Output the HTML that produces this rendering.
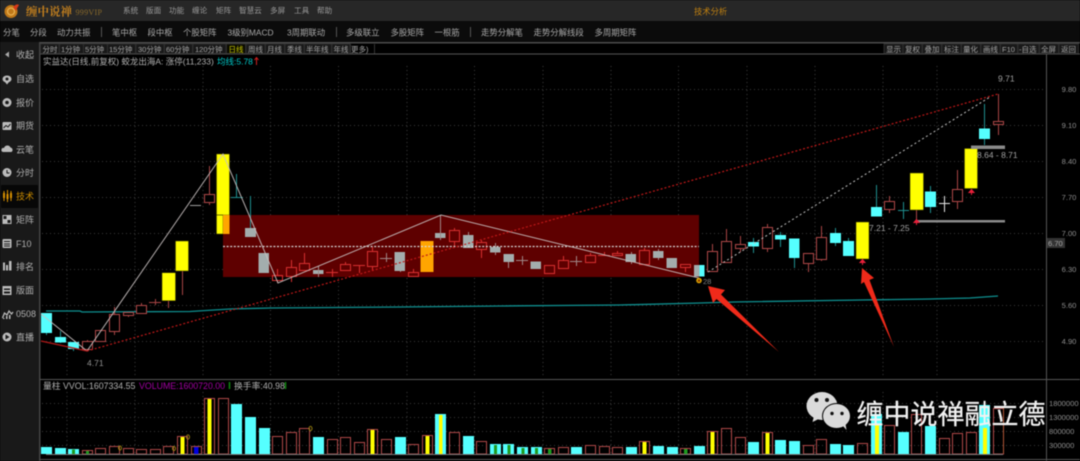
<!DOCTYPE html>
<html><head><meta charset="utf-8"><style>
html,body{margin:0;padding:0;background:#000;width:1080px;height:461px;overflow:hidden}
svg{display:block;position:absolute;left:0;top:0;filter:blur(.4px)}
text{font-family:"Liberation Sans","Noto Sans CJK SC",sans-serif;fill:#a0a0a0}
.m text{font-size:7.6px;fill:#9a9a9a}
.t text{font-size:8.4px;fill:#a8a8a8}
.p text{font-size:7.5px;fill:#a4a4a4}
.s text{font-size:9px;fill:#b0b0b0}
.a text{font-size:7.6px;fill:#8c8c8c}
</style></head><body>
<svg width="1080" height="461" viewBox="0 0 1080 461" xmlns="http://www.w3.org/2000/svg">
<rect width="1080" height="461" fill="#000"/>
<!-- title bar -->
<rect width="1080" height="21" fill="#272727"/>
<rect y="21" width="1080" height="21" fill="#0b0b0b"/>
<circle cx="11" cy="11.500" r="6.500" fill="#c07818"/><circle cx="11" cy="11.500" r="3.500" fill="none" stroke="#e8b050" stroke-width="1.300"/>
<path d="M13 7 Q17 3 19 5 Q17 8 16 11 Z" fill="#d83a18"/>
<text x="26" y="15.500" style="font-family:'Liberation Serif','Noto Serif CJK SC',serif;font-size:11.500px;font-weight:700;fill:#c4801e">缠中说禅</text>
<text x="75.500" y="15" style="font-family:'Liberation Serif',serif;font-size:8px;fill:#8a6a2a;letter-spacing:.3px">999VIP</text>
<g class="m"><text x="123" y="13">系统</text><text x="146" y="13">版面</text><text x="169" y="13">功能</text><text x="192" y="13">缠论</text><text x="216" y="13">矩阵</text><text x="239" y="13">智慧云</text><text x="270" y="13">多屏</text><text x="294" y="13">工具</text><text x="317" y="13">帮助</text></g>
<text x="694" y="14.500" style="font-size:8.300px;fill:#c08010">技术分析</text>
<g class="t"><text x="3" y="35.500">分笔</text><text x="30" y="35.500">分段</text><text x="57" y="35.500">动力共振</text><text x="112" y="35.500">笔中枢</text><text x="147.500" y="35.500">段中枢</text><text x="183" y="35.500">个股矩阵</text><text x="227.500" y="35.500">3级别MACD</text><text x="287" y="35.500">3周期联动</text><text x="346" y="35.500">多级联立</text><text x="390.500" y="35.500">多股矩阵</text><text x="434.500" y="35.500">一根筋</text><text x="481" y="35.500">走势分解笔</text><text x="533.500" y="35.500">走势分解线段</text><text x="594.500" y="35.500">多周期矩阵</text></g>
<path d="M101.500 27v10M336.500 27v10M470.500 27v10" stroke="#555"/>
<!-- sidebar -->
<rect y="42" width="39" height="419" fill="#191919"/>
<rect x="39" y="42" width="1.500" height="419" fill="#444"/>
<rect x="1" y="185" width="37" height="23" fill="#070707"/>
<!-- tab rows -->
<rect x="40" y="42" width="1040" height="1.500" fill="#4c4c4c"/>
<rect x="40" y="53.500" width="1040" height="1" fill="#555"/>
<g fill="#181818" stroke="#333" stroke-width=".8">
<rect x="40.500" y="44" width="18.500" height="9.500"/><rect x="59.500" y="44" width="24" height="9.500"/><rect x="83.500" y="44" width="24" height="9.500"/><rect x="107.500" y="44" width="28" height="9.500"/><rect x="136" y="44" width="28" height="9.500"/><rect x="164.500" y="44" width="28" height="9.500"/><rect x="193" y="44" width="33" height="9.500"/><rect x="226.500" y="44" width="19" height="9.500" fill="#0a0a00"/><rect x="246" y="44" width="19" height="9.500"/><rect x="265.500" y="44" width="19" height="9.500"/><rect x="285" y="44" width="19" height="9.500"/><rect x="304.500" y="44" width="27" height="9.500"/><rect x="332" y="44" width="18" height="9.500"/>
<rect x="884" y="44" width="19" height="9.500"/><rect x="903" y="44" width="19" height="9.500"/><rect x="922.500" y="44" width="19" height="9.500"/><rect x="942" y="44" width="19" height="9.500"/><rect x="961.500" y="44" width="19" height="9.500"/><rect x="981" y="44" width="19" height="9.500"/><rect x="1000.500" y="44" width="17" height="9.500"/><rect x="1018" y="44" width="21" height="9.500"/><rect x="1039.500" y="44" width="19" height="9.500"/><rect x="1059" y="44" width="19.500" height="9.500"/>
</g>
<path d="M350.500 44v9.500M374.500 44v9.500" stroke="#333"/>
<g class="p"><text x="42.500" y="52">分时</text><text x="61" y="52">1分钟</text><text x="85" y="52">5分钟</text><text x="109" y="52">15分钟</text><text x="138" y="52">30分钟</text><text x="166" y="52">60分钟</text><text x="195" y="52">120分钟</text><text x="228.500" y="52" style="fill:#c8c800">日线</text><text x="248" y="52">周线</text><text x="267" y="52">月线</text><text x="287" y="52">季线</text><text x="306" y="52">半年线</text><text x="333.500" y="52">年线</text><text x="351" y="52">更多)</text>
<text x="886" y="52">显示</text><text x="905" y="52">复权</text><text x="924.500" y="52">叠加</text><text x="944" y="52">标注</text><text x="963" y="52">量化</text><text x="983" y="52">画线</text><text x="1002" y="52">F10</text><text x="1019" y="52">-自选</text><text x="1041" y="52">全屏</text><text x="1061" y="52">返回</text></g>
<!-- info -->
<text x="43" y="64.500" style="font-size:8.500px;fill:#b0b0b0">实益达(日线,前复权) 蛟龙出海A: 涨停(11,233)</text>
<text x="217" y="64.500" style="font-size:8.500px;fill:#00c8c8">均线:5.78</text>
<path d="M256.500 65v-7M254.500 60l2-2.500 2 2.500" stroke="#d02020" fill="none"/>
<!-- grid -->
<g stroke="#3a3a3a" stroke-dasharray="1 3" fill="none">
<path d="M42 89.500H1046M42 125.500H1046M42 161.500H1046M42 197.500H1046M42 233.500H1046M42 269.500H1046M42 305.500H1046M42 341.500H1046"/>
<path d="M67 66V375M135 66V375M203 66V375M270.500 66V375M338.500 66V375M407 66V375M474.500 66V375M543 66V375M611 66V375M678.500 66V375M747 66V375M815 66V375M883 66V375M937 66V375"/>
<path d="M67 392V455M135 392V455M203 392V455M270.500 392V455M338.500 392V455M407 392V455M474.500 392V455M543 392V455M611 392V455M678.500 392V455M747 392V455M815 392V455M883 392V455M937 392V455"/>
<path d="M42 403.500H1046M42 417.500H1046M42 431.500H1046M42 445.500H1046"/>
</g>
<!-- axis & pane lines -->
<rect x="1046" y="54" width="1" height="407" fill="#555"/>
<rect x="40" y="379" width="1040" height="1" fill="#555"/>
<rect x="40" y="459" width="1040" height="1" fill="#555"/>
<!-- box -->
<rect x="223" y="215" width="476" height="62" fill="#5e0000"/>
<!-- MA line -->
<polyline points="46,311 80,311 82,312 190,311.500 230,309 270,308 400,307 500,306 620,305 700,303 733,302 860,300 930,299 970,298 998,296" fill="none" stroke="#0e8f8f" stroke-width="1.300"/>
<!-- wicks outside box red -->
<path d="M87.500 340V341M87.500 349V351M114.500 307V315M114.500 331V335M128.500 315V317M141.500 303V305M141.500 313V314M155.500 299V305M149 302.500H161M168.500 300V308M182.500 270V295M209.500 166V194M209.500 202V205M712.500 244V252M726.500 229V242M726.500 262V263M740.500 236V244M740.500 248V252M767.500 224V228M767.500 248V252M808.500 263V272M821.500 226V237M821.500 259V261M889.500 196V201M889.500 209V213M916.500 210V225M957.500 170V189M957.500 201V209M998.500 94V121M998.500 124V135" stroke="#a84444" fill="none"/>
<!-- hollow outside box -->
<path d="M82.500 341.500H92.500V349.500H82.500ZM95.500 330.500H105.500V341.500H95.500ZM109.500 314.500H119.500V331.500H109.500ZM123.500 312.500H133.500V315.500H123.500ZM136.500 305.500H146.500V313.500H136.500ZM204.500 194.500H214.500V202.500H204.500ZM707.500 251.500H717.500V271.500H707.500ZM721.500 241.500H731.500V262.500H721.500ZM735.500 244.500H745.500V248.500H735.500ZM762.500 227.500H772.500V248.500H762.500ZM803.500 253.500H813.500V263.500H803.500ZM816.500 237.500H826.500V259.500H816.500ZM884.500 201.500H894.500V209.500H884.500ZM952.500 189.500H962.500V201.500H952.500ZM993.500 121.500H1003.500V124.500H993.500Z" stroke="#b04848" fill="#000"/>
<!-- wicks cyan -->
<path d="M46.500 333V335M60.500 331V343M73.500 349V351M236.500 174V197M231 197.500H243M250.500 196V228M753.500 238V253M780.500 232V247M794.500 258V268M835.500 228V246M848.500 238V241M876.500 185V216M903.500 202V219M898 210.500H909M930.500 186V213M984.500 104V145" stroke="#1f8f8f" fill="none"/>
<!-- cyan bodies -->
<path d="M41 313h11v20h-11zM55 337h11v5.500h-11zM68 342h11v7h-11zM699.500 265h5v11.500h-5zM748 242h11v4.500h-11zM775 235h11v4.500h-11zM789 238.500h10.500v19.500h-10.500zM830 233h11v10h-11zM843 241h11v15h-11zM871 207h11v9.500h-11zM925 191.500h11v15.500h-11zM979 128.500h11v10.500h-11z" fill="#55ffff"/>
<!-- yellow bodies -->
<path d="M162 272.700h13.500v28h-13.500zM175.500 241h13v30h-13zM216.500 154h13v61h-13zM216.500 215h6.500v19h-6.500zM856 222h13v37h-13zM910 173h13.500v37h-13.500zM964.500 148.500h13v40h-13z" fill="#ffff00" stroke="#3a3a00" stroke-width=".5"/>
<path d="M223 215h6.500v19h-6.500zM420.500 241h13v31h-13z" fill="#ffa500"/>
<!-- box wicks -->
<path d="M277.500 269V275M277.500 280V283M291.500 260V267M291.500 276V282M304.500 253V263M304.500 270V271M332.500 269V277M326 272.500H338M345.500 262V264M345.500 270V271M359.500 265V273M353 265.500H365M372.500 247V251M372.500 266V271M413.500 269V272M413.500 276V277M481.500 240V242M481.500 249V258M454.500 228V230M454.500 241V246M549.500 273V274M563.500 256V260M590.500 253V256M590.500 262V263M604.500 252V256M598 255.500H610M617.500 251V253M644.500 248V250M644.500 264V265M685.500 267V272" stroke="#d83030" fill="none"/>
<path d="M272.500 275.500H282.500V280.500H272.500ZM286.500 267.500H296.500V276.500H286.500ZM299.500 263.500H309.500V270.500H299.500ZM340.500 264.500H350.500V270.500H340.500ZM367.500 251.500H377.500V266.500H367.500ZM408.500 272.500H418.500V276.500H408.500ZM449.500 230.500H459.500V241.500H449.500ZM476.500 242.500H486.500V249.500H476.500ZM544.500 265.500H554.500V273.500H544.500ZM558.500 260.500H568.500V268.500H558.500ZM585.500 255.500H595.500V262.500H585.500ZM612.500 253.500H622.500V255.500H612.500ZM639.500 250.500H649.500V264.500H639.500ZM680.500 264.500H690.500V267.500H680.500Z" stroke="#d83030" fill="none"/>
<!-- gray bodies -->
<path d="M245 228h11v9h-11zM258.500 253h10.500v20h-10.500zM313 270h10.500v4h-10.500zM394.500 252h10.500v19h-10.500zM435 233h10.500v5h-10.500zM463 235h10.500v13h-10.500zM490 247h10.500v5.500h-10.500zM503.500 254h10.500v8h-10.500zM530.500 261.500h10.500v7.500h-10.500zM625.500 254h10.500v8h-10.500zM653 251h10.500v7h-10.500zM666.500 258h10.500v10h-10.500zM694 265h5.500v11.500h-5.500z" fill="#a3adad"/>
<path d="M318.500 266V277M440.500 215V240M468.500 232V235M495.500 243V247M495.500 252V255M508.500 262V268M386.500 253V262M380 258.500H392M522.500 256V265M516 260.500H528M576.500 256V266M570 261.500H582M631.500 252V254M631.500 262V264M658.500 249V251M658.500 258V260M400.500 271V272" stroke="#a08888" fill="none"/>
<!-- white doji -->
<path d="M190 205.500H201" stroke="#a0a0a0" fill="none"/>
<path d="M944.500 196V212M939 203.500H950" stroke="#e8e8e8" fill="none"/>
<!-- support bars -->
<rect x="971" y="145.500" width="34" height="3.500" fill="#8a8a8a"/>
<rect x="916" y="220" width="89" height="2.500" fill="#8a8a8a"/>
<!-- red tick arrows -->
<path d="M862.500 265V260M860 262.500L862.500 259.500 865 262.500Z" stroke="#e8203a" fill="#e8203a"/>
<path d="M916.500 225V220M914 222.500L916.500 219.500 919 222.500Z" stroke="#e8203a" fill="#e8203a"/>
<path d="M971.500 195V190M969 192.500L971.500 189.500 974 192.500Z" stroke="#e8203a" fill="#e8203a"/>
<!-- dashed box center -->
<path d="M223 246.500H699" stroke="#d8d8d8" stroke-width="1.300" stroke-dasharray="2 1.600" fill="none"/>
<!-- zigzag -->
<polyline points="41,314 87,351 223,154 278,283 441,215 699,278" fill="none" stroke="#c8c0c0" stroke-width="1" opacity=".9"/>
<path d="M41 341L87 351" stroke="#b01818" stroke-width="1.200" fill="none"/>
<path d="M87 351L998 94" stroke="#c01818" stroke-width="1.200" stroke-dasharray="2 2" fill="none"/>
<path d="M708 272L990 97" stroke="#c0c0c0" stroke-width="1" stroke-dasharray="2 2.500" fill="none"/>
<!-- labels -->
<g style="font-size:8px">
<text x="87" y="366" style="font-size:8.500px;fill:#909090">4.71</text>
<text x="998" y="81.500" style="font-size:8.500px;fill:#a0a0a0">9.71</text>
<text x="977" y="158" style="font-size:8.500px;fill:#a0a0a0">8.64 - 8.71</text>
<text x="869" y="231" style="font-size:8.500px;fill:#a0a0a0">7.21 - 7.25</text>
</g>
<circle cx="699" cy="280.500" r="2.800" fill="#d8a000"/><path d="M697.500 281.500L699 279l1.500 2.500z" fill="#7a2000"/>
<text x="703" y="284" style="font-size:7.500px;fill:#808080">28</text>
<!-- big arrows -->
<polygon points="708,286 725,290 721,294.500 779,352 716.500,299 713,303" fill="#f02a1a"/>
<polygon points="862,268 874,278 869.500,280 894,347 864,282 861,284" fill="#f02a1a"/>
<!-- axis labels -->
<g class="a"><text x="1069" y="92" text-anchor="middle">9.80</text><text x="1069" y="128" text-anchor="middle">9.10</text><text x="1069" y="164" text-anchor="middle">8.40</text><text x="1069" y="200" text-anchor="middle">7.70</text><text x="1069" y="236" text-anchor="middle">7.00</text><text x="1069" y="272" text-anchor="middle">6.30</text><text x="1069" y="308" text-anchor="middle">5.60</text><text x="1069" y="344" text-anchor="middle">4.90</text></g>
<rect x="1047" y="238" width="18" height="10" fill="#333"/>
<text x="1048" y="246" style="font-size:7.600px;fill:#a8a8a8">6.70</text>
<!-- volume text -->
<text x="43" y="389" style="font-size:8.800px;fill:#b0b0b0">量柱 VVOL:1607334.55</text>
<text x="139" y="389" style="font-size:8.800px;fill:#a000a0">VOLUME:1600720.00</text>
<path d="M229.500 382V389M285.500 382V389" stroke="#108a10" stroke-width="1.500"/>
<text x="234" y="389" style="font-size:8.800px;fill:#b0b0b0">换手率:40.98</text>
<!-- volume bars -->
<path d="M41 447h11v7h-11zM55 448h11v6h-11zM68 449h11v5h-11zM231 404h11v50h-11zM245 417h11v37h-11zM259 428h11v26h-11zM313 437h11v17h-11zM395 437h11v17h-11zM435 414h11v40h-11zM463 436h11v18h-11zM490 444h11v10h-11zM503 444h11v10h-11zM517 447h11v7h-11zM531 447h11v7h-11zM571 447h11v7h-11zM626 447h11v7h-11zM653 446h11v8h-11zM667 447h11v7h-11zM694 446h11v8h-11zM748 442h11v12h-11zM775 440h11v14h-11zM789 441h11v13h-11zM830 444h11v10h-11zM843 445h11v9h-11zM871 414h11v40h-11zM898 432h11v22h-11zM925 426h11v28h-11zM979 405h11v49h-11z" fill="#55ffff"/>
<path d="M82.500 450.500h10v3.500h-10zM95.500 448.500h10v5.500h-10zM109.500 446.500h10v7.500h-10zM123.500 448.500h10v5.500h-10zM136.500 449.500h10v4.500h-10zM150.500 449.500h10v4.500h-10zM163.500 446.500h10v7.500h-10zM177.500 436.500h10v17.500h-10zM191.500 446.500h10v7.500h-10zM204.500 398.500h10v55.500h-10zM218.500 398.500h10v55.500h-10zM272.500 436.500h10v17.500h-10zM286.500 432.500h10v21.500h-10zM299.500 428.500h10v25.500h-10zM327.500 439.500h10v14.500h-10zM340.500 437.500h10v16.500h-10zM354.500 442.500h10v11.500h-10zM367.500 429.500h10v24.500h-10zM381.500 439.500h10v14.500h-10zM408.500 444.500h10v9.500h-10zM422.500 435.500h10v18.500h-10zM449.500 432.500h10v21.500h-10zM476.500 441.500h10v12.500h-10zM544.500 448.500h10v5.500h-10zM558.500 447.500h10v6.500h-10zM585.500 445.500h10v8.500h-10zM599.500 446.500h10v7.500h-10zM612.500 447.500h10v6.500h-10zM639.500 441.500h10v12.500h-10zM680.500 448.500h10v5.500h-10zM707.500 431.500h10v22.500h-10zM721.500 428.500h10v25.500h-10zM735.500 437.500h10v16.500h-10zM762.500 432.500h10v21.500h-10zM803.500 445.500h10v8.500h-10zM816.500 439.500h10v14.500h-10zM857.500 443.500h10v10.500h-10zM884.500 425.500h10v28.500h-10zM911.500 414.500h10v39.500h-10zM939.500 438.500h10v15.500h-10zM952.500 433.500h10v20.500h-10zM966.500 432.500h10v21.500h-10zM993.500 408.500h10v45.500h-10z" fill="none" stroke="#b04848"/>
<path d="M180.500 437h4v17h-4zM207.500 399h4v55h-4zM370.500 430h4v24h-4zM425.500 436h4v18h-4zM439 415h3.500v39H439zM642.500 442h4v12h-4zM710.500 432h4v22h-4zM765.500 433h4v21h-4zM875 425h4v29h-4zM983 428h4v26h-4z" fill="#ffff00"/>
<path d="M72 449.500h3v4.500h-3zM86 451h3v3h-3zM494 445h3v9h-3zM507.500 445h3v9h-3zM521.500 448h3v6h-3zM535 448h3v6h-3zM548 449h3.500v5H548zM684 449h3.500v5H684z" fill="#1f9a1f"/>
<rect x="194" y="447" width="4.500" height="7" fill="#0000e0"/>
<path d="M1003.500 408V454" stroke="#b06020" stroke-dasharray="1 1"/>
<path d="M46 454.500H1003" stroke="#777" stroke-width="1"/>
<g fill="none" stroke="#a08a10" stroke-width=".9"><ellipse cx="120" cy="448" rx="1.500" ry="2"/><ellipse cx="174" cy="448.500" rx="1.500" ry="2"/><ellipse cx="188" cy="437" rx="1.500" ry="2.200"/><ellipse cx="310.500" cy="428.500" rx="1.500" ry="2.200"/></g>
<!-- vol axis -->
<g class="a"><text x="1049" y="406">1800000</text><text x="1049" y="420">1300000</text><text x="1049" y="434">800000</text><text x="1049" y="448">300000</text></g>
<!-- wechat -->
<ellipse cx="822" cy="406" rx="15.500" ry="14" fill="#dadada"/><path d="M814 416l-1.500 6 7-3.500z" fill="#dadada"/>
<ellipse cx="836.500" cy="416" rx="14.500" ry="13" fill="#000"/>
<ellipse cx="836.500" cy="416" rx="13.500" ry="12" fill="#dadada"/><path d="M843 426l3.500 4-1-6z" fill="#dadada"/>
<circle cx="816.500" cy="400" r="2" fill="#111"/><circle cx="827" cy="400" r="2" fill="#111"/><circle cx="832" cy="413.500" r="1.700" fill="#111"/><circle cx="842" cy="413.500" r="1.700" fill="#111"/>
<text x="856.500" y="424" style="font-size:27px;fill:#f2f2f2;stroke:#f2f2f2;stroke-width:.25px;font-family:'Liberation Sans','Noto Sans CJK SC',sans-serif">缠中说禅融立德</text>
<!-- sidebar items -->
<g class="s"><text x="16" y="58">收起</text><text x="16" y="82">自选</text><text x="16" y="106">报价</text><text x="16" y="129">期货</text><text x="16" y="153">云笔</text><text x="16" y="176">分时</text><text x="16" y="199.500" style="fill:#c88a00">技术</text><text x="16" y="223">矩阵</text><text x="16" y="247">F10</text><text x="16" y="270">排名</text><text x="16" y="293.500">版面</text><text x="16" y="317">0508</text><text x="16" y="340.500">直播</text></g>
<path d="M9 51.500L5 54.500 9 57.500Z" fill="#aaa"/>
<ellipse cx="7" cy="79" rx="4.500" ry="3.500" fill="#bbb"/><circle cx="7" cy="79" r="1.500" fill="#191919"/><path d="M5 82l2 2.500 2-2.500z" fill="#bbb"/>
<circle cx="7" cy="102.500" r="4.500" fill="#bbb"/><circle cx="7" cy="102.500" r="1.800" fill="#191919"/>
<rect x="2.500" y="122" width="9" height="8" rx="1" fill="#bbb"/><path d="M3.500 128l2.500-2.500 2 1.500 2.500-3" stroke="#191919" fill="none"/>
<path d="M3 152a2 2 0 0 1 1-4a3.500 3.500 0 0 1 6.500-.5a2.500 2.500 0 0 1 1 4.500z" fill="#bbb"/>
<circle cx="7" cy="172.500" r="4.500" fill="#bbb"/><path d="M7 170v3h2.500" stroke="#191919" fill="none"/>
<path d="M4 191v10M7.500 190v12M11 191v10" stroke="#d89000" stroke-width="1"/><path d="M3 193h2v5H3zM6.500 194h2v5h-2zM10 193h2v5h-2z" fill="#d89000"/>
<rect x="2.500" y="215" width="9" height="9" fill="#bbb"/><path d="M3.500 216h3v3h-3zM7.500 220h3v3h-3z" fill="#191919"/>
<rect x="2.500" y="239" width="9" height="9" rx="1" fill="#bbb"/><path d="M4 241.500h6M4 244h6M4 246h6" stroke="#191919"/>
<path d="M3 262.500h2v8H3zM6 265h2v5.500H6zM9 261h2.500v9.500H9z" fill="#bbb"/>
<rect x="2.500" y="286" width="9" height="9" fill="#bbb"/><path d="M4 288.500h6v1.500H4zM4 291.500h6v2H4z" fill="#191919"/>
<path d="M2.500 318l2-5 2.500 2 2-4 2.500 3 1.500-2" stroke="#bbb" fill="none" stroke-width="1.300"/><path d="M3 319h1.500v-1H3zM6 319h1.500v-3H6zM9 319h1.500v-4H9z" fill="#bbb"/>
<circle cx="7" cy="337" r="4.500" fill="#bbb"/><path d="M5.500 334.500v5l4-2.500z" fill="#191919"/>
</svg>
</body></html>
